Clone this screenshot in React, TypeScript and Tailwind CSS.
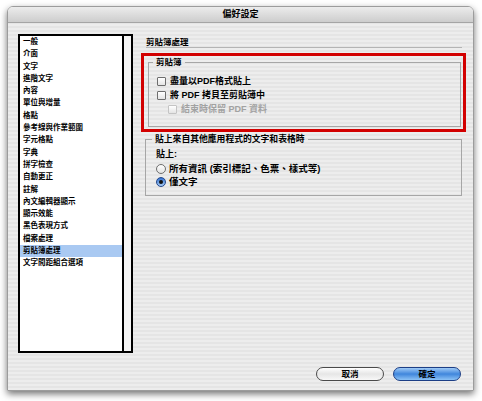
import React from 'react'

const categories = [
  '一般',
  '介面',
  '文字',
  '進階文字',
  '內容',
  '單位與增量',
  '格點',
  '參考線與作業範圍',
  '字元格點',
  '字典',
  '拼字檢查',
  '自動更正',
  '註解',
  '內文編輯器顯示',
  '顯示效能',
  '黑色表現方式',
  '檔案處理',
  '剪貼簿處理',
  '文字間距組合選項',
]

const selected = '剪貼簿處理'

function Checkbox({ label, disabled = false }: { label: string; disabled?: boolean }) {
  return (
    <label className="flex items-center gap-[4px] h-[14px]">
      <span
        className={`w-[9px] h-[9px] rounded-[1px] border bg-gradient-to-b from-white to-[#e4e4e4] ${
          disabled ? 'border-[#c4c4c4]' : 'border-[#6e6e6e]'
        }`}
      />
      <span className={`text-[9px] leading-[14px] font-bold ${disabled ? 'text-[#a2a2a2]' : 'text-black'}`}>
        {label}
      </span>
    </label>
  )
}

function Radio({ label, checked = false }: { label: string; checked?: boolean }) {
  return (
    <label className="flex items-center gap-[3px] h-[13px]">
      {checked ? (
        <span className="w-[10px] h-[10px] rounded-full border border-[#24488c] bg-gradient-to-b from-[#2f6fd0] to-[#a9cdf5] flex items-center justify-center">
          <span className="w-[4px] h-[4px] rounded-full bg-[#111]" />
        </span>
      ) : (
        <span className="w-[10px] h-[10px] rounded-full border border-[#6e6e6e] bg-gradient-to-b from-white to-[#e2e2e2]" />
      )}
      <span className="text-[9.5px] leading-[13px] font-bold text-black">{label}</span>
    </label>
  )
}

export default function App() {
  return (
    <div className="w-[482px] h-[401px] bg-white pt-[6px] pl-[7px] font-['Liberation_Sans','Noto_Sans_CJK_TC',sans-serif]">
      <div className="w-[467px] h-[385px] flex flex-col rounded-t-[6px] border border-[#9c9c9c] shadow-[0_3px_7px_rgba(0,0,0,0.55)] overflow-hidden">
        {/* title bar */}
        <div className="h-[16px] flex items-center justify-center bg-gradient-to-b from-[#ececec] to-[#cdcdcd] border-b border-[#a5a5a5]">
          <span className="text-[9px] font-bold leading-none text-black">偏好設定</span>
        </div>

        <div className="flex-1 flex flex-col pl-[10px] pt-[11px] bg-[repeating-linear-gradient(0deg,#ededed_0px,#ededed_2px,#e5e5e5_2px,#e5e5e5_4px)]">
          <div className="flex">
            {/* category list */}
            <div className="w-[115px] h-[319px] border-2 border-black bg-white flex">
              <ul className="flex-1">
                {categories.map((c) => (
                  <li
                    key={c}
                    className={`h-[12.3px] leading-[12.3px] pl-[3px] text-[7.5px] font-bold text-black ${
                      c === selected ? 'bg-[#a9c9f2]' : ''
                    }`}
                  >
                    {c}
                  </li>
                ))}
              </ul>
              <div className="w-[9px] border-l-2 border-black bg-[#f5f5f5]" />
            </div>

            {/* settings panel */}
            <div className="ml-[8px] w-[325px] flex flex-col">
              <div className="ml-[5px] mr-[4px] pt-[3px] border-b border-[#b4b4b4]">
                <h2 className="text-[8.5px] leading-[10px] font-bold text-black">剪貼簿處理</h2>
              </div>

              <div className="mt-[5px] h-[79px] border-[3px] border-[#d20000] flex flex-col">
                <fieldset className="mt-[1px] ml-[4px] mr-[2px] h-[70px] border border-[#a6a6a6]">
                  <legend className="ml-[4px] px-[3px] text-[8.5px] leading-[10px] font-bold text-black">剪貼簿</legend>
                  <div className="mt-[7px] pl-[8px] flex flex-col">
                    <Checkbox label="盡量以PDF格式貼上" />
                    <Checkbox label="將 PDF 拷貝至剪貼簿中" />
                    <div className="pl-[11px]">
                      <Checkbox label="結束時保留 PDF 資料" disabled />
                    </div>
                  </div>
                </fieldset>
              </div>

              <fieldset className="mt-[2px] ml-[4px] mr-[4px] h-[62px] border border-[#a6a6a6]">
                <legend className="ml-[6px] px-[3px] text-[8.8px] leading-[10px] font-bold text-black">
                  貼上來自其他應用程式的文字和表格時
                </legend>
                <div className="pl-[10px]">
                  <div className="mt-[4px] text-[9px] leading-[12px] font-bold text-black">貼上:</div>
                  <div className="mt-[2px] flex flex-col">
                    <Radio label="所有資訊 (索引標記、色票、樣式等)" />
                    <Radio label="僅文字" checked />
                  </div>
                </div>
              </fieldset>
            </div>
          </div>

          {/* buttons */}
          <div className="mt-[14px] flex justify-end gap-[9px] pr-[12px]">
            <button className="w-[68px] h-[14px] rounded-full border border-[#4a4a4a] bg-gradient-to-b from-white via-[#e6e6e6] to-[#f8f8f8] text-[8.5px] leading-none font-bold text-black">
              取消
            </button>
            <button className="w-[68px] h-[14px] rounded-full border border-[#1d3f86] bg-gradient-to-b from-[#9fcaf6] via-[#3f86dc] to-[#8cc2f5] text-[8.5px] leading-none font-bold text-black">
              確定
            </button>
          </div>
        </div>
      </div>
    </div>
  )
}
